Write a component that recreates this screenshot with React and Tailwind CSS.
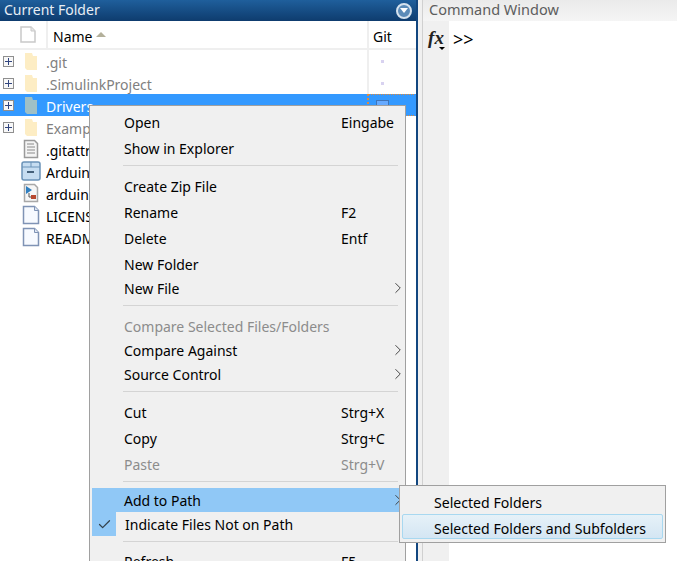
import { ChevronRight, Check } from 'lucide-react';

const files = [
  { name: '.git', icon: 'folder', tree: true, faded: true, dot: true },
  { name: '.SimulinkProject', icon: 'folder', tree: true, faded: true, dot: true },
  { name: 'Drivers', icon: 'folder', tree: true, selected: true },
  { name: 'Examples', icon: 'folder', tree: true, faded: true },
  { name: '.gitattributes', icon: 'text' },
  { name: 'Arduino.prj', icon: 'project' },
  { name: 'arduino.slx', icon: 'model' },
  { name: 'LICENSE', icon: 'page' },
  { name: 'README.md', icon: 'page' },
];

const menu = [
  { label: 'Open', hint: 'Eingabe', h: 'h-[26px]' },
  { label: 'Show in Explorer', h: 'h-[26px]' },
  { sep: 'h-[12px]', at: 'pt-[4px]' },
  { label: 'Create Zip File', h: 'h-[26px]' },
  { label: 'Rename', hint: 'F2', h: 'h-[26px]' },
  { label: 'Delete', hint: 'Entf', h: 'h-[26px]' },
  { label: 'New Folder', h: 'h-[26px]' },
  { label: 'New File', arrow: true, h: 'h-[22px]' },
  { sep: 'h-[15px]', at: 'pt-[6px]' },
  { label: 'Compare Selected Files/Folders', disabled: true, h: 'h-[24px]' },
  { label: 'Compare Against', arrow: true, h: 'h-[24px]' },
  { label: 'Source Control', arrow: true, h: 'h-[24px]' },
  { sep: 'h-[13px]', at: 'pt-[5px]' },
  { label: 'Cut', hint: 'Strg+X', h: 'h-[26px]' },
  { label: 'Copy', hint: 'Strg+C', h: 'h-[26px]' },
  { label: 'Paste', hint: 'Strg+V', disabled: true, h: 'h-[26px]' },
  { sep: 'h-[11px]', at: 'pt-[4px]' },
  { label: 'Add to Path', arrow: true, active: true, h: 'h-[24px]' },
  { label: 'Indicate Files Not on Path', checked: true, h: 'h-[24px]' },
  { sep: 'h-[12px]', at: 'pt-[5px]' },
  { label: 'Refresh', hint: 'F5', h: 'h-[26px]' },
];

function FileIcon({ type, selected }) {
  if (type === 'folder') {
    return (
      <svg width="14" height="19" viewBox="0 0 14 19">
        <path d="M1 1h7l1 3h4v14H3L1 16z" fill={selected ? '#9fc0c6' : '#fdedc4'} />
      </svg>
    );
  }
  if (type === 'text') {
    return (
      <svg width="16" height="20" viewBox="0 0 16 20">
        <path d="M1.5 1.5h10l3 3v14h-13z" fill="#f4f4f4" stroke="#9a9a9a" strokeWidth="1.5" />
        <path d="M4 5h7M4 8h8M4 11h8M4 14h8" stroke="#8a8a8a" />
      </svg>
    );
  }
  if (type === 'project') {
    return (
      <svg width="20" height="20" viewBox="0 0 20 20">
        <rect x="1" y="1" width="18" height="18" rx="2" fill="#c6ddf1" stroke="#6b93b8" strokeWidth="1.5" />
        <path d="M1 6h18M10 1v5" stroke="#6b93b8" />
        <path d="M6 11h7" stroke="#44607a" strokeWidth="2" />
      </svg>
    );
  }
  if (type === 'model') {
    return (
      <svg width="16" height="20" viewBox="0 0 16 20">
        <path d="M1.5 1.5h10l3 3v14h-13z" fill="#f6f6f6" stroke="#a8a8a8" strokeWidth="1.5" />
        <path d="M3 3l6 4-6 4z" fill="#2f7fc0" />
        <path d="M6 10v4h2" stroke="#555" fill="none" />
        <rect x="8" y="12" width="5" height="4" fill="#b8482e" />
      </svg>
    );
  }
  return (
    <svg width="18" height="20" viewBox="0 0 18 20">
      <path d="M1.5 1.5h11l4 4v13h-15z" fill="#f7faff" stroke="#7f93b5" strokeWidth="1.5" />
      <path d="M12.5 1.5v4h4" fill="#dfe7f3" stroke="#7f93b5" />
    </svg>
  );
}

function Expander() {
  return (
    <span className="flex items-center justify-center w-[11px] h-[11px] border border-[#8f8f8f] bg-[#f8f8f8]">
      <svg width="7" height="7" viewBox="0 0 7 7">
        <path d="M0 3.5h7M3.5 0v7" stroke="#31457e" />
      </svg>
    </span>
  );
}

function FileRow({ file }) {
  return (
    <div className={`flex h-[22px] items-center ${file.selected ? 'bg-[#3399ff]' : ''}`}>
      <div className="w-[20px] pl-[3px] flex items-center">{file.tree && <Expander />}</div>
      <div className="w-[26px] flex justify-center items-center -translate-x-[2px]">
        <FileIcon type={file.icon} selected={file.selected} />
      </div>
      <span
        className={`flex-1 pt-[2px] text-[14px] whitespace-nowrap ${
          file.selected ? 'text-white' : file.faded ? 'text-[#808080]' : 'text-black'
        }`}
      >
        {file.name}
      </span>
      <div
        className={`w-[47px] h-full flex items-center border-l-2 ${
          file.selected ? 'pl-[7px] items-start pt-[5px] border-y border-dotted border-[#e08a3c] bg-[#3399ff]' : 'pl-[12px] border-[#efefef]'
        }`}
      >
        {file.dot && <span className="w-[3px] h-[3px] bg-[#d8d2f0]" />}
        {file.selected && <span className="w-[13px] h-[13px] border border-[#3f74b8] bg-[#66aaff]" />}
      </div>
      <div className="w-[2px]" />
    </div>
  );
}

function MenuRow({ item }) {
  if (item.sep) {
    return (
      <div className={`${item.sep} ${item.at} pl-[31px] pr-[2px]`}>
        <div className="h-[1px] bg-[#d4d4d4]" />
      </div>
    );
  }
  return (
    <div className={`${item.h} flex items-center ${item.active ? 'bg-[#90c8f6]' : ''}`}>
      <div className={`w-[24px] h-full shrink-0 flex items-center justify-center ${item.checked ? 'bg-[#90c8f6]' : ''}`}>
        {item.checked && <Check size={15} strokeWidth={2} className="text-[#33424d]" />}
      </div>
      <span className={`${item.checked ? 'ml-[9px]' : 'ml-[8px]'} flex-1 text-[14px] whitespace-nowrap ${item.disabled ? 'text-[#8c8c8c]' : 'text-black'}`}>
        {item.label}
      </span>
      {item.hint && (
        <span className={`w-[59px] text-[14px] ${item.disabled ? 'text-[#8c8c8c]' : 'text-black'}`}>{item.hint}</span>
      )}
      {item.arrow && <ChevronRight size={18} strokeWidth={1.2} className="-mr-[7px] shrink-0 text-[#333]" />}
    </div>
  );
}

export default function App() {
  return (
    <div className="relative w-[677px] h-[561px] overflow-hidden flex bg-white font-['Noto_Sans',sans-serif]">
      {/* Current folder panel */}
      <div className="w-[416px] flex flex-col">
        <div className="h-[21px] flex items-center justify-between pl-[4px] pr-[4px] bg-gradient-to-b from-[#1f5f9c] to-[#0e3c6e]">
          <span className="pb-[2px] text-[14px] text-[#e8eef5]">Current Folder</span>
          <span className="flex items-center justify-center w-[16px] h-[16px] rounded-full border-2 border-[#d5e2ee] bg-[#5b8bb8]">
            <span className="w-0 h-0 border-x-[4px] border-x-transparent border-t-[5px] border-t-white" />
          </span>
        </div>
        <div className="h-[29px] flex items-center border-b-2 border-[#efefef]">
          <div className="w-[48px] h-full flex items-center pl-[20px] border-r-2 border-[#efefef]">
            <svg width="16" height="17" viewBox="0 0 16 17">
              <path d="M1 1h10l4 4v11H1z" fill="#fff" stroke="#c9c9c9" strokeWidth="1.5" />
              <path d="M11 1v4h4" fill="#e6e6e6" stroke="#c9c9c9" />
            </svg>
          </div>
          <span className="ml-[5px] pt-[3px] text-[14px] text-black">Name</span>
          <span className="ml-[4px] w-0 h-0 border-x-[5px] border-x-transparent border-b-[5px] border-b-[#b3b09a]" />
          <div className="flex-1" />
          <div className="w-[47px] h-full flex items-center pl-[4px] pt-[3px] border-l-2 border-[#efefef] text-[14px] text-black">Git</div>
          <div className="w-[2px]" />
        </div>
        <div className="flex-1">
          {files.map((f) => (
            <FileRow key={f.name} file={f} />
          ))}
        </div>
      </div>

      <div className="w-[2px] bg-[#12467f]" />
      <div className="w-[5px] bg-[#f0f0f0] border-r border-[#d0d0d0]" />

      {/* Command window */}
      <div className="flex-1 flex flex-col">
        <div className="h-[21px] flex items-center pl-[6px] pb-[2px] bg-gradient-to-b from-[#eaeaea] to-[#f5f5f5] text-[14.5px] text-[#5d5d5d]">
          Command Window
        </div>
        <div className="flex-1 flex">
          <div className="relative w-[26px] shrink-0 bg-[#f0f0f0] flex justify-center">
            <span className="font-['Liberation_Serif',serif] italic font-bold text-[19px] leading-[22px] mt-[6px] text-[#222]">fx</span>
            <span className="absolute top-[26px] left-[16px] w-0 h-0 border-x-[3px] border-x-transparent border-t-[3px] border-t-black" />
          </div>
          <span className="ml-[4px] mt-[7px] text-[18px] leading-[22px] text-black">&gt;&gt;</span>
        </div>
      </div>

      {/* Context menu */}
      <div className="absolute left-[89px] top-[105px] w-[317px] pt-[3px] pl-[2px] pr-[5px] bg-[#f0f0f0] border border-[#a0a0a0]">
        {menu.map((item, i) => (
          <MenuRow key={i} item={item} />
        ))}
      </div>

      {/* Submenu */}
      <div className="absolute left-[399px] top-[485px] w-[267px] h-[58px] p-[2px] pt-[4px] bg-[#f0f0f0] border border-[#a0a0a0]">
        <div className="h-[24px] flex items-center pl-[32px] pt-[2px] text-[14.1px] text-black">Selected Folders</div>
        <div className="h-[25px] flex items-center pl-[31px] pt-[4px] text-[14.1px] text-black rounded-[2px] border border-[#a8d8f0] bg-gradient-to-b from-[#e6f1f8] to-[#d4e6f3]">
          Selected Folders and Subfolders
        </div>
      </div>
    </div>
  );
}
